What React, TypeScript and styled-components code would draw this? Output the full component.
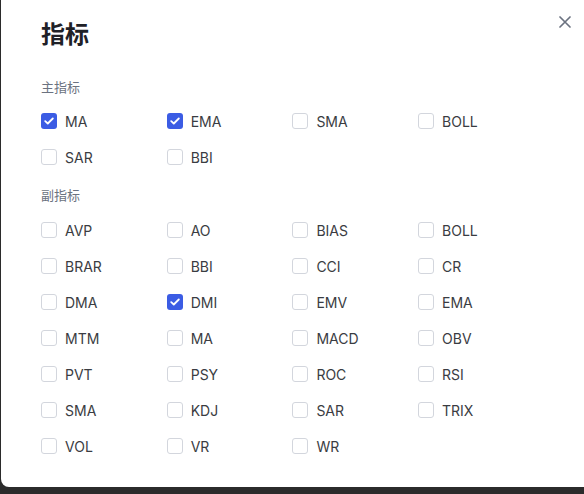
import React, { useState } from "react";
import styled, { createGlobalStyle } from "styled-components";

const Global = createGlobalStyle`
  html, body { margin: 0; padding: 0; height: 100%; }
  body {
    background: #2b2b2b;
    font-family: Inter, "Noto Sans CJK SC", "Noto Sans", sans-serif;
    overflow: hidden;
  }
`;

const Modal = styled.div`
  box-sizing: border-box;
  width: 600px;
  margin-top: -10px;
  margin-left: 1px;
  padding: 20px 40px 31px 40px;
  background: #ffffff;
  border-radius: 8px;
`;

const Header = styled.div`
  display: flex;
  justify-content: space-between;
  align-items: flex-start;
  margin-right: -16px;
`;

const Title = styled.h2`
  margin: 9px 0 0 0;
  font-size: 24px;
  line-height: 32px;
  font-weight: 700;
  color: #1f2127;
  font-family: Inter, "Noto Sans CJK SC", sans-serif;
`;

const CloseButton = styled.button`
  width: 24px;
  height: 24px;
  padding: 0;
  border: none;
  background: transparent;
  display: flex;
  align-items: center;
  justify-content: center;
  color: #6b7280;
  cursor: pointer;
`;

const Section = styled.section<{ $first?: boolean }>`
  margin-top: ${(p) => (p.$first ? "26px" : "18px")};
`;

const SectionLabel = styled.div<{ $gap: number }>`
  font-size: 13px;
  line-height: 20px;
  color: #6b7280;
  margin-bottom: ${(p) => p.$gap}px;
`;

const Grid = styled.div`
  display: grid;
  grid-template-columns: repeat(4, 125.7px);
  row-gap: 16px;
`;

const Item = styled.label`
  display: flex;
  align-items: center;
  gap: 8px;
  height: 20px;
  cursor: pointer;
  font-size: 14px;
  color: #3a3c42;
`;

const Box = styled.span<{ $checked: boolean }>`
  box-sizing: border-box;
  width: 16px;
  height: 16px;
  border-radius: 3px;
  flex-shrink: 0;
  display: flex;
  align-items: center;
  justify-content: center;
  background: ${(p) => (p.$checked ? "#3b5ce4" : "#ffffff")};
  border: ${(p) => (p.$checked ? "none" : "1px solid #d3d6dd")};
`;

const HiddenInput = styled.input`
  display: none;
`;

type Opt = { name: string; checked?: boolean };

const main: Opt[] = [
  { name: "MA", checked: true },
  { name: "EMA", checked: true },
  { name: "SMA" },
  { name: "BOLL" },
  { name: "SAR" },
  { name: "BBI" },
];

const sub: Opt[] = [
  "AVP", "AO", "BIAS", "BOLL",
  "BRAR", "BBI", "CCI", "CR",
  "DMA", "DMI", "EMV", "EMA",
  "MTM", "MA", "MACD", "OBV",
  "PVT", "PSY", "ROC", "RSI",
  "SMA", "KDJ", "SAR", "TRIX",
  "VOL", "VR", "WR",
].map((n) => ({ name: n, checked: n === "DMI" }));

function Check({ opt }: { opt: Opt }) {
  const [on, setOn] = useState(!!opt.checked);
  return (
    <Item>
      <HiddenInput type="checkbox" checked={on} onChange={() => setOn(!on)} />
      <Box $checked={on}>
        {on && (
          <svg width="10" height="8" viewBox="0 0 10 8" fill="none">
            <path d="M1.2 4.1 L3.8 6.5 L8.8 1.5" stroke="#fff" strokeWidth="1.8" strokeLinecap="round" strokeLinejoin="round" />
          </svg>
        )}
      </Box>
      {opt.name}
    </Item>
  );
}

export default function App() {
  return (
    <>
      <Global />
      <Modal>
        <Header>
          <Title>指标</Title>
          <CloseButton aria-label="关闭">
            <svg width="12" height="12" viewBox="0 0 12 12" fill="none">
              <path d="M1 1 L11 11 M11 1 L1 11" stroke="currentColor" strokeWidth="1.7" strokeLinecap="round" />
            </svg>
          </CloseButton>
        </Header>
        <Section $first>
          <SectionLabel $gap={14}>主指标</SectionLabel>
          <Grid>
            {main.map((o, i) => (
              <Check key={i} opt={o} />
            ))}
          </Grid>
        </Section>
        <Section>
          <SectionLabel $gap={15}>副指标</SectionLabel>
          <Grid>
            {sub.map((o, i) => (
              <Check key={i} opt={o} />
            ))}
          </Grid>
        </Section>
      </Modal>
    </>
  );
}
